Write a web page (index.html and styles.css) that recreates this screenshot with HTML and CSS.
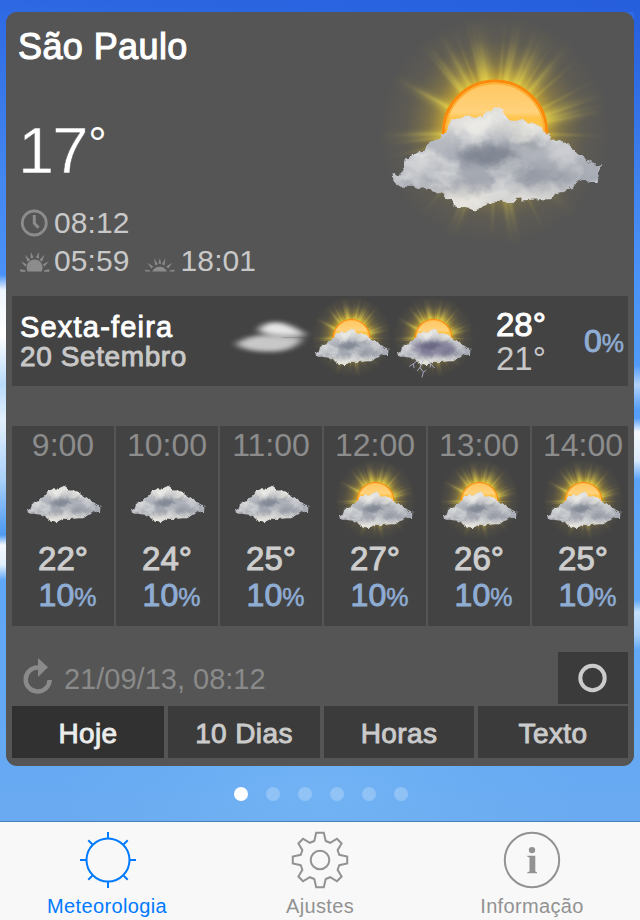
FILE: index.html
```
<!DOCTYPE html>
<html lang="pt">
<head>
    <meta charset="UTF-8">
    <meta name="viewport" content="width=device-width, initial-scale=1.0">
    <title>Meteorologia</title>
    <link rel="stylesheet" href="styles.css">
</head>
<body>
    <!-- shared weather symbols -->
    <svg class="sprite" aria-hidden="true">
        <defs>
            <filter id="rough" x="-10%" y="-10%" width="120%" height="120%" color-interpolation-filters="sRGB">
                <feTurbulence type="fractalNoise" baseFrequency="0.03" numOctaves="3" seed="4" result="noise"/>
                <feDisplacementMap in="SourceGraphic" in2="noise" scale="32" xChannelSelector="R" yChannelSelector="G"/>
                <feGaussianBlur stdDeviation="1.8"/>
            </filter>
            <filter id="puffs" x="0" y="0" width="100%" height="100%" color-interpolation-filters="sRGB">
                <feTurbulence type="fractalNoise" baseFrequency="0.011 0.018" numOctaves="3" seed="9"/>
                <feColorMatrix values="0 0 0 0 1  0 0 0 0 1  0 0 0 0 0.98  2.2 0 0 0 -0.9"/>
                <feComposite in2="SourceGraphic" operator="in"/>
            </filter>
            <filter id="blur2" x="-20%" y="-20%" width="140%" height="140%"><feGaussianBlur stdDeviation="2.5"/></filter>
            <filter id="blur7" x="-20%" y="-20%" width="140%" height="140%"><feGaussianBlur stdDeviation="9"/></filter>
            <filter id="blur16" x="-50%" y="-50%" width="200%" height="200%"><feGaussianBlur stdDeviation="16"/></filter>
            <filter id="streak" x="-20%" y="-50%" width="140%" height="200%" color-interpolation-filters="sRGB"><feGaussianBlur stdDeviation="34 18"/></filter>
            <radialGradient id="glow" gradientUnits="userSpaceOnUse" cx="374" cy="388" r="345">
                <stop offset="0.42" stop-color="#e0b82c" stop-opacity="0.85"/>
                <stop offset="0.58" stop-color="#b3983a" stop-opacity="0.45"/>
                <stop offset="0.78" stop-color="#8a7a48" stop-opacity="0.16"/>
                <stop offset="1" stop-color="#8a7a48" stop-opacity="0"/>
            </radialGradient>
            <radialGradient id="ray" gradientUnits="userSpaceOnUse" cx="374" cy="398" r="345">
                <stop offset="0.45" stop-color="#ecdc4e" stop-opacity="0.65"/>
                <stop offset="0.65" stop-color="#d8c850" stop-opacity="0.32"/>
                <stop offset="0.82" stop-color="#c8b450" stop-opacity="0.1"/>
                <stop offset="1" stop-color="#c0a850" stop-opacity="0"/>
            </radialGradient>
            <linearGradient id="disc" x1="0" y1="0" x2="0" y2="1">
                <stop offset="0" stop-color="#ffc65f"/>
                <stop offset="0.3" stop-color="#ffd27c"/>
                <stop offset="0.36" stop-color="#ffc44b"/>
                <stop offset="0.6" stop-color="#ffc63c"/>
            </linearGradient>
            <linearGradient id="cloudFill" x1="0" y1="0" x2="0" y2="1">
                <stop offset="0" stop-color="#e0dfdb"/>
                <stop offset="0.35" stop-color="#b6b9c0"/>
                <stop offset="0.7" stop-color="#a6aab3"/>
                <stop offset="1" stop-color="#dedcd6"/>
            </linearGradient>
            <path id="cloudShape" d="M66 532 L92 524 L102 500 L108 478 L130 458 L168 438 L206 416 L228 386 L250 354 L290 344 L322 348 L352 334 L382 322 L410 342 L424 362 L462 362 L518 378 L532 402 L540 426 L572 418 L600 438 L618 458 L642 468 L664 494 L686 490 L686 518 L682 552 L660 552 L648 536 L620 550 L606 562 L578 578 L540 598 L500 598 L430 603 L372 602 L342 616 L320 630 L290 620 L252 612 L228 592 L216 576 L180 568 L130 560 L88 560 Z"/>
            <clipPath id="cloudClip"><use href="#cloudShape"/></clipPath>
        </defs>

        <symbol id="cloud" viewBox="14 36 720 720" overflow="visible">
            <g filter="url(#rough)">
                <use href="#cloudShape" fill="url(#cloudFill)"/>
                <g clip-path="url(#cloudClip)">
                    <use href="#cloudShape" filter="url(#puffs)" opacity="0.55"/>
                    <g filter="url(#blur16)" opacity="0.85">
                        <ellipse cx="350" cy="465" rx="95" ry="32" fill="#757c89"/>
                        <ellipse cx="300" cy="550" rx="80" ry="12" fill="#9da1ab"/>
                        <ellipse cx="520" cy="525" rx="105" ry="18" fill="#868c98"/>
                        <ellipse cx="475" cy="427" rx="36" ry="8" fill="#6d747a"/>
                        <ellipse cx="305" cy="375" rx="70" ry="22" fill="#f3f1eb"/>
                        <ellipse cx="465" cy="382" rx="60" ry="14" fill="#f3f0e4"/>
                        <ellipse cx="150" cy="500" rx="45" ry="24" fill="#dadbdc"/>
                        <ellipse cx="580" cy="460" rx="45" ry="18" fill="#e0e0e2"/>
                        <ellipse cx="290" cy="600" rx="70" ry="16" fill="#f5f2e8"/>
                        <ellipse cx="470" cy="588" rx="100" ry="12" fill="#e8e7e2"/>
                    </g>
                </g>
            </g>
        </symbol>

        <symbol id="sun" viewBox="14 36 720 720" overflow="visible">
            <circle cx="374" cy="388" r="345" fill="url(#glow)"/>
            <g stroke="url(#ray)" fill="none">
                <path filter="url(#blur7)" stroke-width="18" d="M374 398L300 50M374 398L330 50M374 398L165 130M374 398L215 110M374 398L25 205M374 398L70 240M374 398L450 50M374 398L500 90M374 398L550 70M374 398L610 120M374 398L710 275M374 398L690 330M374 398L30 410M374 398L230 740M374 398L435 740M374 398L640 680"/>
                <path filter="url(#blur2)" stroke-width="4.500" d="M374 398L286 60M374 398L304 70M374 398L322 80M374 398L150 130M374 398L185 150M374 398L215 110M374 398L255 100M374 398L20 200M374 398L60 230M374 398L405 60M374 398L434 70M374 398L452 60M374 398L490 110M374 398L530 80M374 398L562 110M374 398L596 130M374 398L655 150M374 398L680 240M374 398L712 281M374 398L700 312M374 398L680 335M374 398L722 409M374 398L40 405M374 398L30 478M374 398L60 430M374 398L225 710M374 398L254 700M374 398L165 630M374 398L445 720M374 398L420 720M374 398L365 700M374 398L520 690"/>
            </g>
            <circle cx="374" cy="398" r="155" fill="url(#disc)" stroke="#fa8a0c" stroke-width="9"/>
            <circle cx="374" cy="398" r="148" fill="none" stroke="#ffae35" stroke-width="5"/>
        </symbol>

        <symbol id="partly" viewBox="14 36 720 720" overflow="visible">
            <use href="#sun" x="14" y="36" width="720" height="720"/>
            <use href="#cloud" x="14" y="36" width="720" height="720"/>
        </symbol>

        <symbol id="storm" viewBox="14 36 720 720" overflow="visible">
            <use href="#partly" x="14" y="36" width="720" height="720"/>
            <ellipse cx="380" cy="490" rx="190" ry="65" fill="#3c2f68" opacity="0.35" filter="url(#blur16)"/>
            <g fill="none" stroke="#b9b8dc" stroke-width="7">
                <path d="M240 590L203 619L169 641M203 619L210 655M285 591L260 650L288 690L276 735M260 650L235 680M288 690L312 672M330 585L350 619L385 655M350 619L345 650"/>
            </g>
        </symbol>

        <symbol id="fog" viewBox="14 36 720 720" overflow="visible">
            <g filter="url(#streak)">
                <path fill="#c8c8c8" d="M90 450C160 390 300 365 400 382L650 400C625 480 480 525 350 515C220 512 140 490 90 450Z"/>
                <path fill="#e6e6e6" d="M280 340C310 260 440 252 520 285C590 307 640 345 690 376C560 385 380 385 280 340Z"/>
            </g>
            <path d="M480 394L700 398" stroke="#444" stroke-width="12" opacity="0.5" filter="url(#blur7)"/>
        </symbol>
    </svg>

    <div class="screen">
        <main class="card">
            <section class="current">
                <div class="current-info">
                    <h1 class="city">São Paulo</h1>
                    <div class="current-temp">17<span class="degree">°</span></div>
                    <div class="time-row">
                        <svg class="time-icon" viewBox="0 0 30 28">
                            <circle cx="14.3" cy="14" r="12" fill="none" stroke="#8c8c8c" stroke-width="2.8"/>
                            <path d="M14.3 6v8.3l4.2 4.4" fill="none" stroke="#8c8c8c" stroke-width="3" stroke-linejoin="round"/>
                        </svg>
                        <span>08:12</span>
                    </div>
                    <div class="time-row">
                        <svg class="time-icon" viewBox="0 0 30 28">
                            <path fill="#8c8c8c" d="M7.6 24.4a8 8 0 1 1 14 0zM0 22.3l5.400 1v1.400H.4zM29.600 22.300l-5.400 1v1.400h5zM.8 14.200l5.800 3-1.200 2.500zM28.800 14.200l-5.800 3 1.200 2.500zM5 7.800l5.200 5.200-2.600 1.700zM24.600 7.800l-5.200 5.200 2.600 1.700zM10.800 5l2.800 5.600-3 .8zM18.800 5l-2.800 5.600 3 .8z"/>
                        </svg>
                        <span>05:59</span>
                        <svg class="time-icon sunset" viewBox="0 0 30 28">
                            <path fill="#8c8c8c" d="M7.200 24.500a8.200 8.200 0 0 1 14.800 0zM0 22.400l5 1v1.200H.6zM29.600 22.400l-5 1v1.200h4.600zM2.400 15.800l5.800 3.700-1.800 2zM27.200 15.800l-5.800 3.700 1.800 2zM9.200 11.400l3.600 5.800-2.700 1zM20.400 11.400l-3.600 5.800 2.700 1zM14.800 11l1.400 5.700h-2.800z"/>
                        </svg>
                        <span>18:01</span>
                    </div>
                </div>
                <svg class="current-icon"><use href="#partly"/></svg>
            </section>

            <section class="day">
                <div class="day-name">
                    <div class="weekday">Sexta-feira</div>
                    <div class="date">20 Setembro</div>
                </div>
                <div class="day-icons">
                    <svg class="icon"><use href="#fog"/></svg>
                    <svg class="icon"><use href="#partly"/></svg>
                    <svg class="icon"><use href="#storm"/></svg>
                </div>
                <div class="day-temps">
                    <div class="high">28°</div>
                    <div class="low">21°</div>
                </div>
                <div class="rain day-rain">0<small>%</small></div>
            </section>

            <section class="hours">
                <div class="hour">
                    <div class="hour-time">9:00</div>
                    <svg class="icon cloudy"><use href="#cloud"/></svg>
                    <div class="hour-temp">22°</div>
                    <div class="rain">10<small>%</small></div>
                </div>
                <div class="hour">
                    <div class="hour-time">10:00</div>
                    <svg class="icon cloudy"><use href="#cloud"/></svg>
                    <div class="hour-temp">24°</div>
                    <div class="rain">10<small>%</small></div>
                </div>
                <div class="hour">
                    <div class="hour-time">11:00</div>
                    <svg class="icon cloudy"><use href="#cloud"/></svg>
                    <div class="hour-temp">25°</div>
                    <div class="rain">10<small>%</small></div>
                </div>
                <div class="hour">
                    <div class="hour-time">12:00</div>
                    <svg class="icon"><use href="#partly"/></svg>
                    <div class="hour-temp">27°</div>
                    <div class="rain">10<small>%</small></div>
                </div>
                <div class="hour">
                    <div class="hour-time">13:00</div>
                    <svg class="icon"><use href="#partly"/></svg>
                    <div class="hour-temp">26°</div>
                    <div class="rain">10<small>%</small></div>
                </div>
                <div class="hour">
                    <div class="hour-time">14:00</div>
                    <svg class="icon"><use href="#partly"/></svg>
                    <div class="hour-temp">25°</div>
                    <div class="rain">10<small>%</small></div>
                </div>
            </section>

            <div class="update">
                <svg class="refresh" viewBox="0 0 30 38">
                    <path d="M15.5 9.500A12 12 0 1 0 26.700 22" fill="none" stroke="#8a8a8a" stroke-width="4.500"/>
                    <path d="M15 0l10 9.200-10 9.800z" fill="#8a8a8a"/>
                </svg>
                <span class="updated">21/09/13, 08:12</span>
                <button class="btn btn-circle" aria-label="Modo">
                    <svg width="30" height="30" viewBox="0 0 30 30"><circle cx="14.500" cy="15" r="12.200" fill="none" stroke="#cbcbcb" stroke-width="4"/></svg>
                </button>
            </div>

            <nav class="views">
                <button class="btn active">Hoje</button>
                <button class="btn">10 Dias</button>
                <button class="btn">Horas</button>
                <button class="btn">Texto</button>
            </nav>
        </main>

        <div class="dots">
            <span class="dot active"></span>
            <span class="dot"></span>
            <span class="dot"></span>
            <span class="dot"></span>
            <span class="dot"></span>
            <span class="dot"></span>
        </div>

        <footer class="tabbar">
            <a class="tab active">
                <svg class="tab-icon" viewBox="-29 -29 58 58">
                    <circle r="21.500"/>
                    <path d="M0-28v7M0 21v7M-28 0h7M21 0h7M-19.700-19.700l4.800 4.800M19.700-19.700l-4.800 4.800M-19.700 19.700l4.800-4.800M19.700 19.700l-4.800-4.800"/>
                </svg>
                <span>Meteorologia</span>
            </a>
            <a class="tab">
                <svg class="tab-icon" viewBox="-29 -29 58 58">
                    <circle r="9.300"/>
                    <path d="M-3.800-27.200H3.800L5.700-19L10.200-17.200L17-21.300L21.600-16.500L17.600-9.800L19.300-5.200L27.200-3.500V3.500L19.300 5.200L17.600 9.800L21.600 16.500L17 21.300L10.200 17.200L5.700 19L3.800 27.200H-3.800L-5.700 19L-10.200 17.200L-17 21.300L-21.600 16.500L-17.600 9.800L-19.300 5.200L-27.200 3.500V-3.500L-19.300-5.200L-17.600-9.800L-21.600-16.500L-17-21.300L-10.200-17.200L-5.700-19Z"/>
                </svg>
                <span>Ajustes</span>
            </a>
            <a class="tab">
                <svg class="tab-icon" viewBox="-29 -29 58 58">
                    <circle r="27.200"/>
                    <circle class="solid" cy="-9.900" r="3.200"/>
                    <path class="solid" d="M-4.700-4.200H3.300V11.600L5 12.200V13.200H-4.700V12.200L-2.500 11.600V-2.600L-4.700-3.200Z"/>
                </svg>
                <span>Informação</span>
            </a>
        </footer>
    </div>
</body>
</html>
```
FILE: styles.css
```
* {
    box-sizing: border-box;
}
body {
    font-family: "Liberation Sans", Arial, sans-serif;
    margin: 0;
    padding: 0;
    color: #c8c8c8;
}
.sprite {
    position: absolute;
    width: 0;
    height: 0;
}
.screen {
    width: 640px;
    height: 920px;
    padding-top: 12px;
    display: flex;
    flex-direction: column;
    overflow: hidden;
    background:
        linear-gradient(transparent 275px, #eef5fd 290px, #fff 335px, #b9dafa 385px, #e3f0fc 420px, #a9d1fa 480px, #5ba3f3 525px, #4f9bf3 535px, #f3f8fe 545px, #e1effc 565px, transparent 580px) left top / 6px 100% no-repeat,
        linear-gradient(transparent 365px, #b3d4fa 385px, transparent 410px, transparent 418px, #f4f9fe 432px, #dcecfc 460px, transparent 480px, transparent 600px, #c5e0fb 612px, #a5cffa 635px, transparent 650px) right top / 6px 100% no-repeat,
        radial-gradient(ellipse 260px 130px at 50% 790px, rgba(120, 186, 246, 0.55), transparent),
        linear-gradient(90deg, transparent, rgba(20, 70, 205, 0.3)) top / 100% 12px no-repeat,
        linear-gradient(rgba(20, 70, 205, 0.3), transparent) right 12px / 6px 240px no-repeat,
        linear-gradient(#2d68e2, #4488f2 180px, #4b95f8 300px, #5ea7f8 540px, #66a9f3 760px, #6aaaf0 820px);
}
.card {
    width: 628px;
    height: 754px;
    margin: 0 auto;
    padding: 0 6px;
    background-color: #555;
    border-radius: 11px;
    display: flex;
    flex-direction: column;
}
.current {
    height: 284px;
    display: flex;
    justify-content: space-between;
}
.current-info {
    padding-left: 6px;
}
.current-icon {
    width: 240px;
    height: 240px;
    margin-right: 13px;
    overflow: visible;
}
.city {
    margin: 0;
    padding-top: 15px;
    font-size: 36px;
    line-height: 40px;
    font-weight: normal;
    letter-spacing: 0.4px;
    color: #fff;
    -webkit-text-stroke: 1.1px #fff;
}
.current-temp {
    margin-top: 47px;
    font-size: 65px;
    line-height: 74px;
    letter-spacing: -2px;
    color: #fff;
    -webkit-text-stroke: 0.5px #555;
}
.degree {
    margin-left: 2px;
    font-size: 46px;
    line-height: 0;
    vertical-align: 13px;
    -webkit-text-stroke: 0;
}
.time-row {
    height: 38px;
    display: flex;
    align-items: center;
    font-size: 30px;
    letter-spacing: 0.1px;
}
.current-temp + .time-row {
    margin-top: 16px;
}
.time-icon {
    width: 30px;
    height: 28px;
    margin: 0 4px 0 2px;
}
.sunset {
    margin-left: 15px;
    margin-right: 6px;
}
.icon {
    width: 85px;
    height: 85px;
    margin: 0 -1.5px;
    overflow: visible;
}
.day {
    height: 90px;
    background-color: #434343;
    display: flex;
}
.day-name {
    width: 216px;
    padding: 16px 0 0 8px;
    font-size: 28px;
    line-height: 30px;
    letter-spacing: 0.6px;
    -webkit-text-stroke: 0.9px;
}
.weekday {
    font-size: 29px;
    letter-spacing: 1.2px;
    color: #fff;
}
.day-icons {
    display: flex;
    width: 266px;
}
.day-icons .icon {
    margin-top: -1.5px;
}
.day-temps {
    width: 90px;
    padding-top: 12px;
    padding-left: 2px;
    font-size: 33px;
    line-height: 34px;
}
.high {
    color: #fff;
    -webkit-text-stroke: 1px #fff;
}
.rain {
    font-size: 32px;
    color: #8facd3;
    white-space: nowrap;
    -webkit-text-stroke: 1px;
}
.rain small {
    font-size: 25px;
    -webkit-text-stroke: 0.5px;
}
.day-rain {
    line-height: 90px;
}
.hours {
    height: 200px;
    margin-top: 40px;
    display: flex;
    gap: 2px;
    overflow: hidden;
}
.hour {
    flex: 0 0 102px;
    background-color: #434343;
    display: flex;
    flex-direction: column;
    align-items: center;
}
.hour-time {
    height: 32px;
    font-size: 32px;
    line-height: 38px;
    color: #8c8c8c;
}
.hour-temp {
    margin-top: -1px;
    font-size: 33px;
    line-height: 34px;
    color: #cdcdcd;
    -webkit-text-stroke: 1px;
}
.hour .rain {
    margin-left: 9px;
    line-height: 38px;
}
.cloudy {
    transform: translateY(-6px);
}
.update {
    height: 52px;
    margin-top: 26px;
    display: flex;
    align-items: center;
}
.refresh {
    width: 30px;
    height: 38px;
    margin-left: 11px;
    margin-top: -2px;
}
.updated {
    flex: 1;
    padding-left: 11px;
    padding-top: 2px;
    font-size: 29px;
    color: #8a8a8a;
}
.btn {
    height: 52px;
    border: none;
    padding: 3px 0 0;
    background-color: #3b3b3b;
    color: #cbcbcb;
    font-family: inherit;
    font-size: 28px;
    letter-spacing: 0.4px;
    -webkit-text-stroke: 0.9px;
}
.btn.active {
    background-color: #313131;
    color: #ececec;
}
.btn-circle {
    width: 70px;
    padding: 0;
    display: flex;
    align-items: center;
    justify-content: center;
}
.views {
    margin-top: 2px;
    display: grid;
    grid-template-columns: 152px 152px 150px 150px;
    gap: 4px;
}
.dots {
    height: 55px;
    padding-left: 2px;
    display: flex;
    justify-content: center;
    align-items: center;
    gap: 18px;
}
.dot {
    width: 14px;
    height: 14px;
    border-radius: 50%;
    background-color: rgba(255, 255, 255, 0.23);
}
.dot.active {
    background-color: #fff;
}
.tabbar {
    height: 99px;
    padding: 0 2px;
    border-top: 1px solid #4682ba;
    background-color: #f8f8f8;
    display: grid;
    grid-template-columns: repeat(3, 1fr);
}
.tab {
    display: flex;
    flex-direction: column;
    align-items: center;
    padding-top: 9px;
    font-size: 20px;
    line-height: 34px;
    letter-spacing: 0.35px;
    color: #929292;
}
.tab.active {
    color: #007aff;
}
.tab.active span {
    margin-right: 2px;
}
.tab-icon {
    width: 58px;
    height: 58px;
    fill: none;
    stroke: currentColor;
    stroke-width: 2;
}
.solid {
    fill: currentColor;
    stroke: none;
}
```
